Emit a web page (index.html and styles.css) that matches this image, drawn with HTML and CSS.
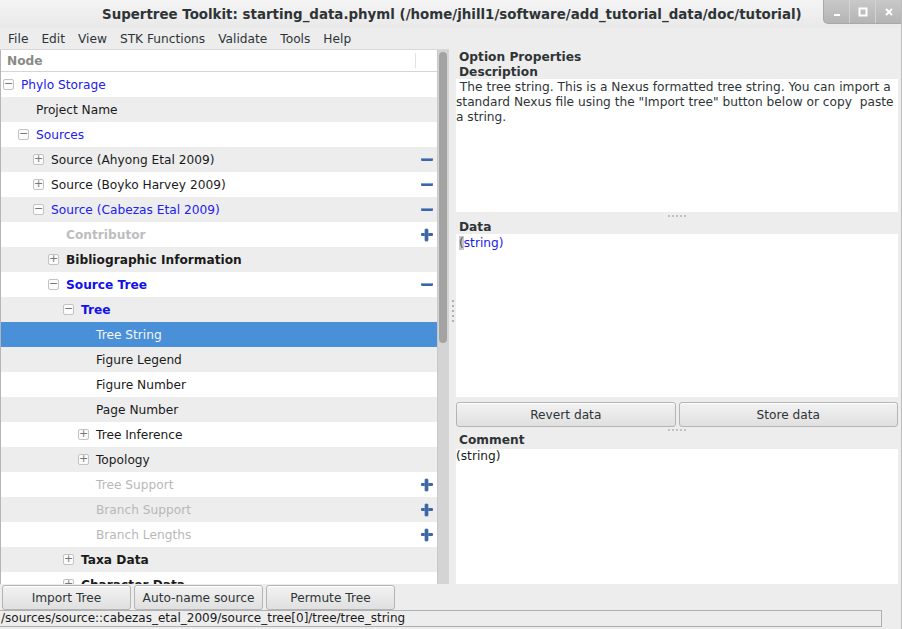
FILE: index.html
```html
<!DOCTYPE html>
<html>
<head>
<meta charset="utf-8">
<link rel="stylesheet" href="styles.css">
</head>
<body>
<div class="window">
  <div class="titlebar">
    <div class="title">Supertree Toolkit: starting_data.phyml (/home/jhill1/software/add_tutorial_data/doc/tutorial)</div>
    <div class="wbtns">
      <span class="wb"><svg width="10" height="10" viewBox="0 0 10 10"><rect x="2" y="7" width="6" height="2" fill="#fff"/></svg></span>
      <span class="wb"><svg width="10" height="10" viewBox="0 0 10 10"><rect x="1.5" y="1.5" width="7" height="7" fill="none" stroke="#fff" stroke-width="2"/></svg></span>
      <span class="wb"><svg width="10" height="10" viewBox="0 0 10 10"><path d="M2 2 L8 8 M8 2 L2 8" stroke="#fff" stroke-width="2"/></svg></span>
    </div>
  </div>
  <div class="menubar">
    <span>File</span><span>Edit</span><span>View</span><span>STK Functions</span><span>Validate</span><span>Tools</span><span>Help</span>
  </div>
  <div class="main">
    <div class="left">
      <div class="treewrap">
        <div class="tree">
          <div class="thead"><span class="hname">Node</span><span class="hsep"></span></div>
          <div class="rows">
            <div class="row w"><span class="ind0"></span><span class="exp">−</span><span class="lbl blue">Phylo Storage</span></div>
            <div class="row g"><span class="ind1"></span><span class="noexp"></span><span class="lbl">Project Name</span></div>
            <div class="row w"><span class="ind1"></span><span class="exp">−</span><span class="lbl blue">Sources</span></div>
            <div class="row g"><span class="ind2"></span><span class="exp">+</span><span class="lbl">Source (Ahyong Etal 2009)</span><span class="act minus"></span></div>
            <div class="row w"><span class="ind2"></span><span class="exp">+</span><span class="lbl">Source (Boyko Harvey 2009)</span><span class="act minus"></span></div>
            <div class="row g"><span class="ind2"></span><span class="exp">−</span><span class="lbl blue">Source (Cabezas Etal 2009)</span><span class="act minus"></span></div>
            <div class="row w"><span class="ind3"></span><span class="noexp"></span><span class="lbl b dim">Contributor</span><span class="act plus"></span></div>
            <div class="row g"><span class="ind3"></span><span class="exp">+</span><span class="lbl b">Bibliographic Information</span></div>
            <div class="row w"><span class="ind3"></span><span class="exp">−</span><span class="lbl b blue">Source Tree</span><span class="act minus"></span></div>
            <div class="row g"><span class="ind4"></span><span class="exp">−</span><span class="lbl b blue">Tree</span></div>
            <div class="row sel"><span class="ind5"></span><span class="noexp"></span><span class="lbl">Tree String</span></div>
            <div class="row g"><span class="ind5"></span><span class="noexp"></span><span class="lbl">Figure Legend</span></div>
            <div class="row w"><span class="ind5"></span><span class="noexp"></span><span class="lbl">Figure Number</span></div>
            <div class="row g"><span class="ind5"></span><span class="noexp"></span><span class="lbl">Page Number</span></div>
            <div class="row w"><span class="ind5"></span><span class="exp">+</span><span class="lbl">Tree Inference</span></div>
            <div class="row g"><span class="ind5"></span><span class="exp">+</span><span class="lbl">Topology</span></div>
            <div class="row w"><span class="ind5"></span><span class="noexp"></span><span class="lbl dim">Tree Support</span><span class="act plus"></span></div>
            <div class="row g"><span class="ind5"></span><span class="noexp"></span><span class="lbl dim">Branch Support</span><span class="act plus"></span></div>
            <div class="row w"><span class="ind5"></span><span class="noexp"></span><span class="lbl dim">Branch Lengths</span><span class="act plus"></span></div>
            <div class="row g"><span class="ind4"></span><span class="exp">+</span><span class="lbl b">Taxa Data</span></div>
            <div class="row w"><span class="ind4"></span><span class="exp">+</span><span class="lbl b">Character Data</span></div>
          </div>
        </div>
        <div class="vscroll"><div class="thumb"></div></div>
      </div>
    </div>
    <div class="vhandle"><i></i><i></i><i></i><i></i><i></i></div>
    <div class="right">
      <div class="heading">Option Properties</div>
      <div class="heading">Description</div>
      <div class="box desc">&nbsp;The tree string. This is a Nexus formatted tree string. You can import a standard Nexus file using the "Import tree" button below or copy&nbsp; paste a string.</div>
      <div class="hhandle"><i></i><i></i><i></i><i></i><i></i></div>
      <div class="heading">Data</div>
      <div class="box data"><span class="cur">(</span><span class="blue">string)</span></div>
      <div class="btnrow"><button class="btn">Revert data</button><button class="btn">Store data</button></div>
      <div class="hhandle small"><i></i><i></i><i></i><i></i><i></i></div>
      <div class="heading">Comment</div>
      <div class="box comment">(string)</div>
    </div>
  </div>
  <div class="bottombtns">
    <button class="btn bb">Import Tree</button><button class="btn bb">Auto-name source</button><button class="btn bb">Permute Tree</button>
  </div>
  <div class="statusbar"><div class="status">/sources/source::cabezas_etal_2009/source_tree[0]/tree/tree_string</div></div>
</div>
</body>
</html>
```

FILE: styles.css
```css
* { box-sizing: border-box; }
html, body { margin: 0; padding: 0; }
body {
  width: 902px; height: 629px; overflow: hidden;
  background: #ededed;
  font-family: "DejaVu Sans", sans-serif;
  font-size: 12.2px;
  color: #1a1a1a;
}
.window { width: 902px; height: 629px; display: flex; flex-direction: column; border-right: 1px solid #bdbdbd; }
.titlebar {
  height: 28px; flex: none; display: flex; align-items: center; position: relative;
  background: linear-gradient(#f4f4f4, #e9e9e9);
}
.title {
  flex: 1; padding-left: 102px; font-weight: bold; font-size: 13.4px; color: #2e3436;
  white-space: nowrap;
}
.wbtns {
  position: absolute; right: 0; top: 0; height: 24px; width: 78px;
  display: flex; border-radius: 0 0 0 5px; overflow: hidden;
  background: linear-gradient(#c9c9c9, #b4b4b4); border-left: 1px solid #a9a9a9; border-bottom: 1px solid #a9a9a9;
}
.wb { flex: 1; display: flex; align-items: center; justify-content: center; border-left: 1px solid #d3d3d3; }
.wb:first-child { border-left: none; }
.menubar { height: 21px; flex: none; display: flex; align-items: center; padding-left: 8px; color: #2e3436; }
.menubar span { margin-right: 13px; }
.main { height: 535px; flex: none; display: flex; }
.left { width: 449px; flex: none; display: flex; flex-direction: column; }
.treewrap { flex: 1; display: flex; overflow: hidden; border-top: 1px solid #d8d8d8; }
.tree { width: 437px; flex: none; background: #fff; overflow: hidden; border-left: 1px solid #b5b5b5; }
.thead { height: 22px; display: flex; align-items: center; border-bottom: 1px solid #d6d6d6; background: #fff; position: relative; }
.hname { font-weight: bold; color: #888a85; padding-left: 6px; }
.hsep { position: absolute; left: 414px; top: 3px; bottom: 3px; width: 1px; background: #e2e2e2; }
.row { height: 25px; display: flex; align-items: center; position: relative; white-space: nowrap; }
.row.w { background: #fff; }
.row.g { background: #ededed; }
.row.sel { background: #4a90d9; color: #f5f5f5; }
.ind0 { width: 2px; flex: none; }
.ind1 { width: 17px; flex: none; }
.ind2 { width: 32px; flex: none; }
.ind3 { width: 47px; flex: none; }
.ind4 { width: 62px; flex: none; }
.ind5 { width: 77px; flex: none; }
.exp {
  width: 11px; height: 11px; flex: none; border: 1px solid #c3c3c3; border-radius: 2px; background: #fbfbfb;
  font-size: 11px; line-height: 8px; text-align: center; color: #777; margin-right: 7px;
}
.noexp { width: 18px; flex: none; }
.b { font-weight: bold; }
.blue { color: #1a1aee; }
.row .blue { color: #2020f0; }
.row .b.blue { color: #1010ee; }
.dim { color: #b8b8b8; }
.b.dim { color: #bdbdbd; }
.act { position: absolute; left: 420px; top: 7px; width: 12px; height: 12px; }
.act.minus::before { content: ""; position: absolute; left: 0; top: 4px; width: 12px; height: 3px; background: #3d66a4; border-radius: 1px; box-shadow: inset 0 1px 0 #7fa0d0; }
.act.plus::before { content: ""; position: absolute; left: 0; top: 4px; width: 12px; height: 3px; background: #3d66a4; border-radius: 1px; }
.act.plus::after { content: ""; position: absolute; left: 4px; top: 0; width: 3px; height: 12px; background: #3d66a4; border-radius: 1px; box-shadow: 0 0 0 0.5px #6f8fc0; }
.vscroll { width: 12px; flex: none; background: #d4d4d4; border-left: 1px solid #c8c8c8; position: relative; }
.thumb { position: absolute; left: 1px; top: 2px; width: 8px; height: 291px; border-radius: 4px; background: #a3a3a3; }
.vhandle { width: 7px; flex: none; display: flex; flex-direction: column; align-items: center; justify-content: center; gap: 3px; padding-bottom: 12px; }
.vhandle i { width: 2px; height: 2px; background: #b0b0b0; display: block; }
.right { flex: 1; display: flex; flex-direction: column; margin-right: 3px; }
.heading { font-weight: bold; color: #2e3436; padding-left: 3px; height: 14px; line-height: 14px; flex: none; }
.heading:first-child { margin-top: 1px; height: 15px; }
.box { background: #fff; flex: none; color: #2e3436; line-height: 15px; }
.desc { height: 133px; padding-top: 1px; }
.hhandle { height: 8px; flex: none; display: flex; justify-content: center; align-items: center; gap: 2px; }
.hhandle i { width: 2px; height: 2px; background: #c0c0c0; display: block; }
.data { height: 163px; padding-top: 2px; padding-left: 3px; }
.cur { background: #c8c8c8; color: #555; }
.data .blue { color: #1a1aee; }
.btnrow { display: flex; gap: 3px; margin-top: 5px; height: 25px; flex: none; }
.btn {
  font-family: "DejaVu Sans", sans-serif; font-size: 12.2px; color: #2e3436;
  background: linear-gradient(#f2f2f2, #e0e0e0); border: 1px solid #b4b4b4; border-radius: 3px;
  height: 25px; padding: 0; box-shadow: inset 0 1px 0 #fff;
}
.btnrow .btn { flex: 1; }
.hhandle.small { height: 6px; }
.comment { height: 135px; color: #1a1a1a; margin-top: 2px; }
.bottombtns { height: 26px; flex: none; display: flex; gap: 3px; padding-left: 2px; padding-top: 1px; }
.bb { width: 129px; }
.statusbar { height: 18px; flex: none; }
.status {
  width: 882px; height: 17px; border: 1px solid #b0b0b0; border-left: none; line-height: 15px; padding-left: 1px; color: #1a1a1a;
  white-space: nowrap; overflow: hidden; font-size: 12px;
}
```
